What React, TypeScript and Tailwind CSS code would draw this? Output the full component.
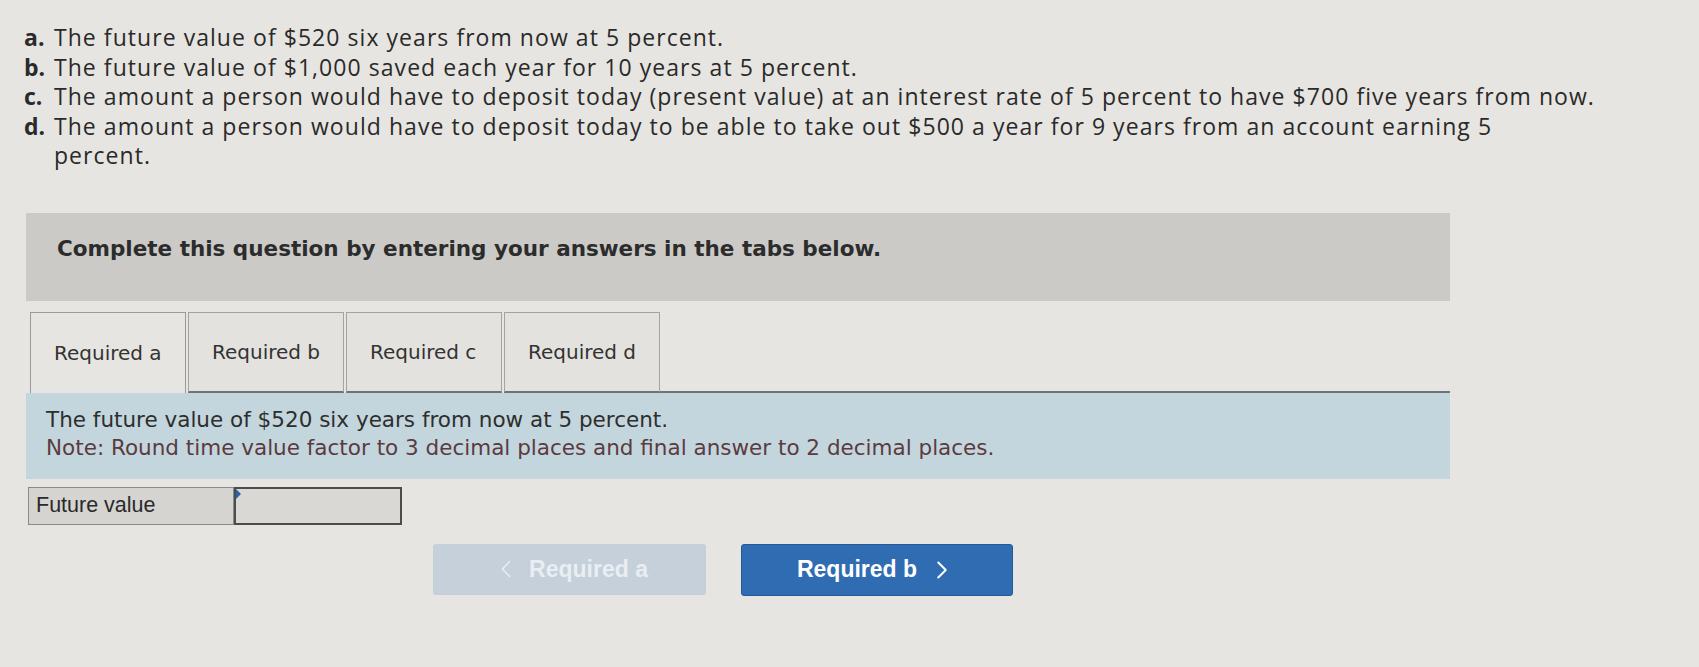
import React from 'react';
import { ChevronLeft, ChevronRight } from 'lucide-react';

const items = [
  { label: 'a.', text: <>The future value of $520 six years from now at 5 percent.</> },
  { label: 'b.', text: <>The future value of $1,000 saved each year for 10 years at 5 percent.</> },
  {
    label: 'c.',
    text: (
      <>
        The amount a person would have to deposit today (present value) at an interest rate of 5 percent to have $700
        five years from now.
      </>
    ),
  },
  {
    label: 'd.',
    text: (
      <>
        The amount a person would have to deposit today to be able to take out $500 a year for 9 years from an account
        earning 5<br />
        percent.
      </>
    ),
  },
];

const tabs = ['Required a', 'Required b', 'Required c', 'Required d'];

export default function App() {
  return (
    <div className="min-h-[667px] w-full bg-[#e7e5e1] text-[#2a2a2a] overflow-hidden">
      {/* Question list */}
      <div className="pt-[23px] pl-[24px] font-['Open_Sans',sans-serif] text-[23px] leading-[29.5px] tracking-[1.05px]">
        {items.map((item) => (
          <div key={item.label} className="flex">
            <span className="w-[30px] shrink-0 font-bold tracking-normal">{item.label}</span>
            <span className="whitespace-nowrap">{item.text}</span>
          </div>
        ))}
      </div>

      <div className="w-[1424px] ml-[26px] mt-[42px]">
        {/* Instructions */}
        <div className="h-[88px] bg-[#cbcac7] pl-[31px] pt-[22px] font-['DejaVu_Sans',sans-serif] text-[21.5px] font-bold leading-[28px] text-[#2c2c2c]">
          Complete this question by entering your answers in the tabs below.
        </div>

        {/* Tabs */}
        <div className="mt-[11px] flex items-end">
          <div className="w-[4px] shrink-0" />
          {tabs.map((t, i) => (
            <div
              key={t}
              className={
                i === 0
                  ? 'h-[81px] w-[156px] shrink-0 border border-b-0 border-[#9a9a98] bg-[#e7e5e1] flex items-center pl-[23px] font-["DejaVu_Sans",sans-serif] text-[20px] text-[#333]'
                  : 'h-[81px] w-[156px] shrink-0 ml-[2px] border border-[#a3a3a1] border-b-2 border-b-[#6e7472] bg-[#e4e2de] flex items-center pl-[23px] font-["DejaVu_Sans",sans-serif] text-[20px] text-[#333]'
              }
            >
              {t}
            </div>
          ))}
          <div className="flex-1 h-[2px] bg-[#6e7472]" />
        </div>

        {/* Prompt */}
        <div className="h-[86px] bg-[#c4d6dd] pl-[20px] pt-[13px] font-['DejaVu_Sans',sans-serif] text-[21.5px] leading-[28px]">
          <div className="text-[#2e2e2e]">The future value of $520 six years from now at 5 percent.</div>
          <div className="text-[#5b3b40]">
            Note: Round time value factor to 3 decimal places and final answer to 2 decimal places.
          </div>
        </div>

        {/* Answer row */}
        <div className="mt-[8px] ml-[2px] flex h-[38px] w-[374px] font-['Liberation_Sans',sans-serif] text-[21.5px]">
          <div className="w-[206px] border border-[#8a8a88] bg-[#d5d4d1] pl-[7px] flex items-center text-[#2a2a2a]">
            Future value
          </div>
          <div className="relative flex-1 border-2 border-[#4a4c4e] bg-[#d9d8d5]">
            <span className="absolute left-0 top-0 h-0 w-0 border-y-[5px] border-l-[5px] border-y-transparent border-l-[#2f5fa8]" />
          </div>
        </div>

        {/* Navigation */}
        <div className="mt-[19px] flex font-['Liberation_Sans',sans-serif] text-[23px] font-bold">
          <button className="ml-[407px] h-[51px] w-[273px] rounded-[3px] bg-[#c5d0da] text-[#e9eef2] flex items-center justify-center gap-[8px]">
            <ChevronLeft className="w-[30px] h-[30px]" strokeWidth={1.2} />
            <span>Required a</span>
          </button>
          <button className="ml-[35px] h-[52px] w-[272px] rounded-[3px] border border-[#24589a] bg-[#2f6cb2] text-white flex items-center justify-center gap-[10px]">
            <span>Required b</span>
            <ChevronRight className="w-[30px] h-[30px]" strokeWidth={1.6} />
          </button>
        </div>
      </div>
    </div>
  );
}
